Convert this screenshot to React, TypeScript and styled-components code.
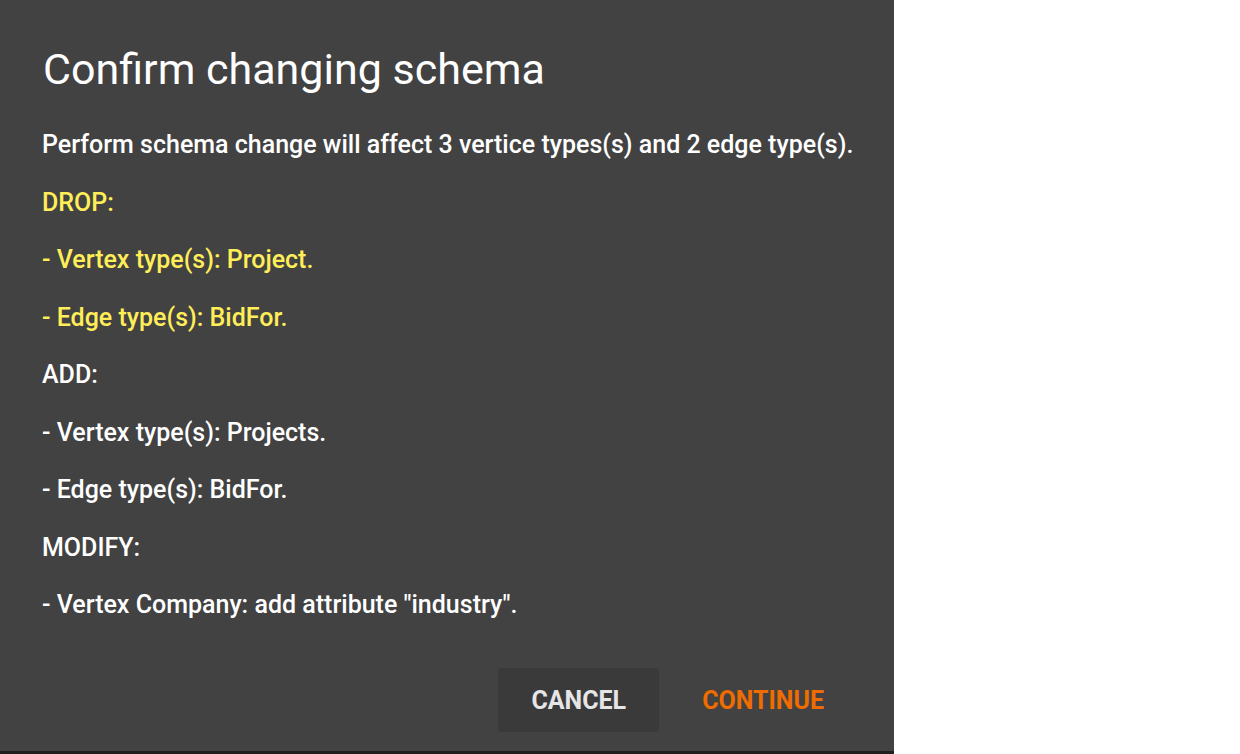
import React, { FC } from 'react';
import styled, { createGlobalStyle } from 'styled-components';

const GlobalStyle = createGlobalStyle`
  html, body {
    margin: 0;
    padding: 0;
    background: #ffffff;
  }

  body {
    font-family: Roboto, "Liberation Sans", sans-serif;
  }
`;

const Page = styled.div`
  display: flex;
  width: 1240px;
  height: 754px;
  background: #ffffff;
`;

const Dialog = styled.section`
  display: flex;
  flex-direction: column;
  box-sizing: border-box;
  width: 894px;
  height: 754px;
  padding: 44px 37px 19px 42px;
  background: #424242;
  border-bottom: 3px solid #1f1f1f;
  color: #ffffff;
`;

const Title = styled.h2`
  margin: 0 0 0 1px;
  font-size: 43px;
  line-height: 50px;
  font-weight: 400;
`;

const Body = styled.div`
  display: flex;
  flex-direction: column;
  gap: 21.5px;
  margin-top: 33px;
`;

const Line = styled.p<{ $tone?: 'drop' }>`
  margin: 0;
  font-size: 25px;
  line-height: 36px;
  font-weight: 500;
  color: ${(p) => (p.$tone === 'drop' ? '#ffee58' : '#ffffff')};
  white-space: nowrap;
`;

const Actions = styled.div`
  display: flex;
  justify-content: flex-end;
  gap: 10px;
  margin-top: auto;
`;

const Button = styled.button<{ $primary?: boolean }>`
  height: 64px;
  padding: 0 33px;
  border: none;
  border-radius: 3px;
  background: ${(p) => (p.$primary ? 'transparent' : '#3a3a3a')};
  color: ${(p) => (p.$primary ? '#ef6c00' : '#e6e6e6')};
  font-family: Roboto, "Liberation Sans", sans-serif;
  font-size: 25px;
  font-weight: 700;
  text-transform: uppercase;
  cursor: pointer;
`;

interface Change {
  text: string;
  tone?: 'drop';
}

const changes: Change[] = [
  { text: 'Perform schema change will affect 3 vertice types(s) and 2 edge type(s).' },
  { text: 'DROP:', tone: 'drop' },
  { text: '- Vertex type(s): Project.', tone: 'drop' },
  { text: '- Edge type(s): BidFor.', tone: 'drop' },
  { text: 'ADD:' },
  { text: '- Vertex type(s): Projects.' },
  { text: '- Edge type(s): BidFor.' },
  { text: 'MODIFY:' },
  { text: '- Vertex Company: add attribute "industry".' },
];

const App: FC = function App() {
  return (
    <Page>
      <GlobalStyle />
      <Dialog>
        <Title>Confirm changing schema</Title>
        <Body>
          {changes.map((c, i) => (
            <Line key={i} $tone={c.tone}>{c.text}</Line>
          ))}
        </Body>
        <Actions>
          <Button>Cancel</Button>
          <Button $primary>Continue</Button>
        </Actions>
      </Dialog>
    </Page>
  );
};

export default App;
